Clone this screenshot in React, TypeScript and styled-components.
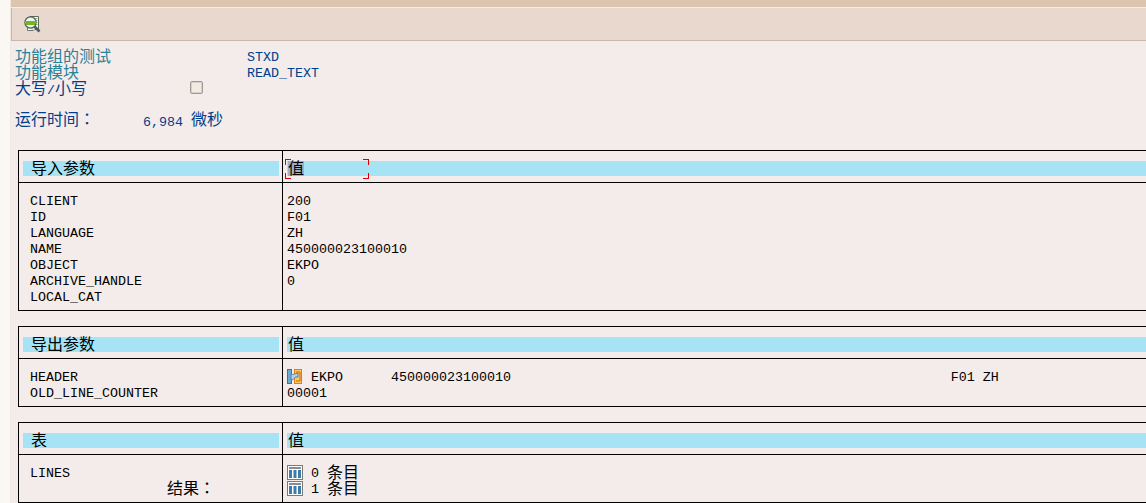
import React from "react";
import styled, { createGlobalStyle } from "styled-components";

const Global = createGlobalStyle`
  html, body { margin: 0; padding: 0; background: #f9f5f1; overflow: hidden; }
  #root { width: 1146px; height: 503px; overflow: hidden; }
`;

const Page = styled.div`
  display: flex;
  width: 1146px;
  height: 503px;
  overflow: hidden;
  font-family: "Liberation Mono", "Noto Sans CJK SC", monospace;
  font-size: 13.33px;
  line-height: 16px;
  color: #000;
`;

const Strip = styled.div`
  flex: 0 0 10px;
  background: #fbf7f3;
  border-right: 1px solid #f0e8e2;
`;

const Main = styled.div`
  flex: 1;
  min-width: 0;
  background: #f4ecea;
`;

const TopBand = styled.div`
  height: 7px;
  background: #dcc4ae;
  border-bottom: 1px solid #f4ecea;
`;

const Toolbar = styled.div`
  display: flex;
  align-items: center;
  height: 32px;
  padding-left: 12px;
  background: #e8d8cd;
  border-left: 1px solid #c9b8aa;
  border-bottom: 1px solid #c9b8aa;
`;

const Han = styled.span<{ $up?: number }>`
  display: inline-block;
  font-family: "Noto Sans CJK SC", sans-serif;
  font-size: 16px;
  line-height: 16px;
  transform: translateY(${(p) => -(p.$up ?? 0)}px);
`;

const Colon = styled(Han)`
  font-family: "Noto Sans CJK TC", sans-serif;
`;

const Info = styled.div`
  padding: 8px 0 0 4px;
`;

const InfoRow = styled.div<{ $teal?: boolean }>`
  display: flex;
  align-items: center;
  height: 16px;
  color: ${(p) => (p.$teal ? "#2a8296" : "#00408a")};
`;

const InfoLabel = styled.div<{ $width: number }>`
  flex: 0 0 ${(p) => p.$width}px;
`;

const InfoValue = styled.div<{ $raised?: boolean }>`
  color: #00408a;
  padding-top: ${(p) => (p.$raised ? "0" : "2px")};
`;

const Check = styled.div`
  align-self: flex-start;
  width: 11px;
  height: 11px;
  border: 1px solid #a09a94;
  border-radius: 2px;
  background: #f2ebe4;
  box-shadow: inset 0 0 0 1px #d8d0c8;
`;

const Spacer = styled.div`
  height: 16px;
`;

const Tables = styled.div`
  width: 1240px;
  display: flex;
  flex-direction: column;
  gap: 15px;
  margin: 21px 0 0 7px;
`;

const Table = styled.div`
  display: grid;
  grid-template-columns: 263px 1fr;
  border: 1px solid #000;
`;

const HeadCell = styled.div<{ $second?: boolean }>`
  position: relative;
  height: 32px;
  padding: 10px ${(p) => (p.$second ? "0" : "3px")} 0 4px;
  box-sizing: border-box;
  border-bottom: 1px solid #000;
  ${(p) => p.$second && "border-left: 1px solid #000;"}
`;

const HeadBar = styled.div<{ $second?: boolean }>`
  height: 15px;
  background: #a6e4f5;
  padding-left: ${(p) => (p.$second ? "1px" : "8px")};
  display: flex;
  align-items: center;
`;

const Selected = styled.span`
  background: #9fb1c9;
  display: inline-block;
  height: 15px;
  line-height: 15px;
`;

const Corner = styled.i<{ $right?: boolean; $bottom?: boolean }>`
  position: absolute;
  width: 5px;
  height: 5px;
  ${(p) => (p.$right ? "left: 80px;" : "left: 2px;")}
  ${(p) => (p.$bottom ? "top: 22px;" : "top: 8px;")}
  border-color: #d80000;
  border-style: solid;
  border-width: ${(p) => (p.$bottom ? "0 0 1px 0" : "1px 0 0 0")};
  ${(p) => (p.$right ? "border-right-width: 1px;" : "border-left-width: 1px;")}
`;

const BodyCell = styled.div<{ $second?: boolean }>`
  padding: 10px 0 5px ${(p) => (p.$second ? "4px" : "11px")};
  ${(p) => p.$second && "border-left: 1px solid #000;"}
`;

const Line = styled.div`
  display: flex;
  align-items: center;
  height: 16px;
  padding-top: 1px;
  margin-bottom: -1px;
  white-space: pre;
`;

const Result = styled.div`
  height: 16px;
  padding-left: 137px;
`;

const IconSlot = styled.svg`
  flex: 0 0 16px;
  align-self: flex-start;
  width: 16px;
  height: 16px;
  margin: -1px 8px 0 0;
  display: block;
`;

const SearchIcon = () => (
  <svg width="17" height="17" viewBox="0 0 17 17" aria-hidden>
    <path d="M5.5 0.5h9v13h-4" fill="#fff" stroke="#5c6a66" />
    <path d="M11 2.5h2.5M11.5 4.5h2M11.5 6.5h2M11.5 8.5h2" stroke="#9aa85a" />
    <path d="M3.5 11.5v3h6" fill="#fff" stroke="#6a7672" />
    <circle cx="6.5" cy="6.5" r="5.6" fill="#eef4f0" stroke="#4f5c5c" strokeWidth="1.2" />
    <rect x="2" y="5" width="9" height="4" fill="#72b81c" />
    <path d="M10.5 10.5l5 5" stroke="#4c5a62" strokeWidth="2.6" />
  </svg>
);

const StructIcon = () => (
  <IconSlot viewBox="0 0 16 16" aria-hidden>
    <rect x="7.5" y="0.5" width="7" height="14" fill="#f8cc60" stroke="#e87a10" />
    <rect x="0.5" y="0.5" width="4" height="14" fill="#6fa8d0" stroke="#2f78a8" />
    <path d="M9 3h4v9H9" fill="none" stroke="#d85a10" />
    <path d="M4 5c2 1 3 0 7-1v4H8.5C7.5 8 7.5 11 4 11z" fill="#b8d4e4" stroke="#3c7ea8" strokeWidth="0.9" />
  </IconSlot>
);

const TableIcon = () => (
  <IconSlot viewBox="0 0 16 16" aria-hidden>
    <rect x="0.5" y="0.5" width="15" height="14" fill="#fff" stroke="#7a7a7a" />
    <rect x="2" y="2" width="12" height="2" fill="#8c8c8c" />
    <rect x="2" y="5" width="3" height="8" fill="#3a7cae" />
    <rect x="6.5" y="5" width="3" height="8" fill="#3a7cae" />
    <rect x="11" y="5" width="3" height="8" fill="#3a7cae" />
  </IconSlot>
);

const Val = () => <Han $up={2}>值</Han>;

export default function App() {
  return (
    <Page>
      <Global />
      <Strip />
      <Main>
        <TopBand />
        <Toolbar>
          <SearchIcon />
        </Toolbar>
        <Info>
          <InfoRow $teal>
            <InfoLabel $width={232}><Han>功能组的测试</Han></InfoLabel>
            <InfoValue>STXD</InfoValue>
          </InfoRow>
          <InfoRow $teal>
            <InfoLabel $width={232}><Han>功能模块</Han></InfoLabel>
            <InfoValue>READ_TEXT</InfoValue>
          </InfoRow>
          <InfoRow>
            <InfoLabel $width={175}><Han>大写</Han>/<Han>小写</Han></InfoLabel>
            <Check />
          </InfoRow>
          <Spacer />
          <InfoRow>
            <InfoLabel $width={128}><Han $up={1}>运行时间</Han><Colon $up={1}>：</Colon></InfoLabel>
            <InfoValue $raised>6,984 <Han $up={1}>微秒</Han></InfoValue>
          </InfoRow>
        </Info>
        <Tables>
          <Table>
            <HeadCell>
              <HeadBar><Han $up={2}>导入参数</Han></HeadBar>
            </HeadCell>
            <HeadCell $second>
              <HeadBar $second><Selected><Val /></Selected></HeadBar>
              <Corner />
              <Corner $right />
              <Corner $bottom />
              <Corner $right $bottom />
            </HeadCell>
            <BodyCell>
              <Line>CLIENT</Line>
              <Line>ID</Line>
              <Line>LANGUAGE</Line>
              <Line>NAME</Line>
              <Line>OBJECT</Line>
              <Line>ARCHIVE_HANDLE</Line>
              <Line>LOCAL_CAT</Line>
            </BodyCell>
            <BodyCell $second>
              <Line>200</Line>
              <Line>F01</Line>
              <Line>ZH</Line>
              <Line>450000023100010</Line>
              <Line>EKPO</Line>
              <Line>0</Line>
              <Line> </Line>
            </BodyCell>
          </Table>
          <Table>
            <HeadCell>
              <HeadBar><Han $up={2}>导出参数</Han></HeadBar>
            </HeadCell>
            <HeadCell $second>
              <HeadBar $second><Val /></HeadBar>
            </HeadCell>
            <BodyCell>
              <Line>HEADER</Line>
              <Line>OLD_LINE_COUNTER</Line>
            </BodyCell>
            <BodyCell $second>
              <Line><StructIcon />{"EKPO      450000023100010" + " ".repeat(55) + "F01 ZH"}</Line>
              <Line>00001</Line>
            </BodyCell>
          </Table>
          <Table>
            <HeadCell>
              <HeadBar><Han $up={2}>表</Han></HeadBar>
            </HeadCell>
            <HeadCell $second>
              <HeadBar $second><Val /></HeadBar>
            </HeadCell>
            <BodyCell>
              <Line>LINES</Line>
              <Result><Han $up={2}>结果</Han><Colon $up={2}>：</Colon></Result>
            </BodyCell>
            <BodyCell $second>
              <Line><TableIcon />0 <Han $up={3}>条目</Han></Line>
              <Line><TableIcon />1 <Han $up={3}>条目</Han></Line>
            </BodyCell>
          </Table>
        </Tables>
      </Main>
    </Page>
  );
}
